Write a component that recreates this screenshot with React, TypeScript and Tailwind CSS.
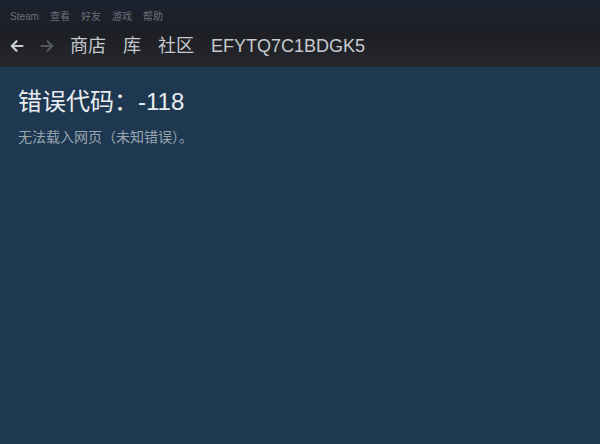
import React from "react";

const font = { fontFamily: '"Liberation Sans", "Noto Sans CJK SC", sans-serif' };

const menus = ["Steam", "查看", "好友", "游戏", "帮助"];
const navs = ["商店", "库", "社区", "EFYTQ7C1BDGK5"];

const Arrow: React.FC<{ dir: "left" | "right"; color: string }> = ({ dir, color }) => (
  <svg width="14" height="14" viewBox="0 0 14 14" fill="none">
    <g stroke={color} strokeWidth="2.2" strokeLinecap="round" strokeLinejoin="round"
      transform={dir === "right" ? "translate(14 0) scale(-1 1)" : undefined}>
      <path d="M12.5 7H2" />
      <path d="M6.5 2.2L1.8 7l4.7 4.8" />
    </g>
  </svg>
);

export default function App() {
  return (
    <div className="w-[600px] h-[444px] flex flex-col bg-[#1d3850] overflow-hidden" style={font}>
      <div className="h-[67px] shrink-0 flex flex-col bg-gradient-to-b from-[#1b2230] via-[#1d1f25] to-[#25272c]">
        <div className="h-[30px] flex items-center gap-[11px] pl-[10px] pt-[3px] text-[10px] text-[#6c7077]">
          {menus.map((m) => (
            <span key={m}>{m}</span>
          ))}
        </div>
        <div className="flex items-center pl-[10px] h-[32px]">
          <Arrow dir="left" color="#c9cdd1" />
          <span className="w-[16px]" />
          <Arrow dir="right" color="#54575c" />
          <div className="flex items-center gap-[17px] ml-[16px] text-[18px] text-[#c6cacf]">
            {navs.map((n) => (
              <span key={n}>{n}</span>
            ))}
          </div>
        </div>
      </div>
      <div className="flex flex-col px-[18px] pt-[21px]">
        <div className="text-[24px] leading-[28px] text-[#e9ecef]">错误代码：-118</div>
        <div className="mt-[12px] text-[14px] leading-[18px] text-[#9aa5af]">无法载入网页（未知错误）。</div>
      </div>
    </div>
  );
}
